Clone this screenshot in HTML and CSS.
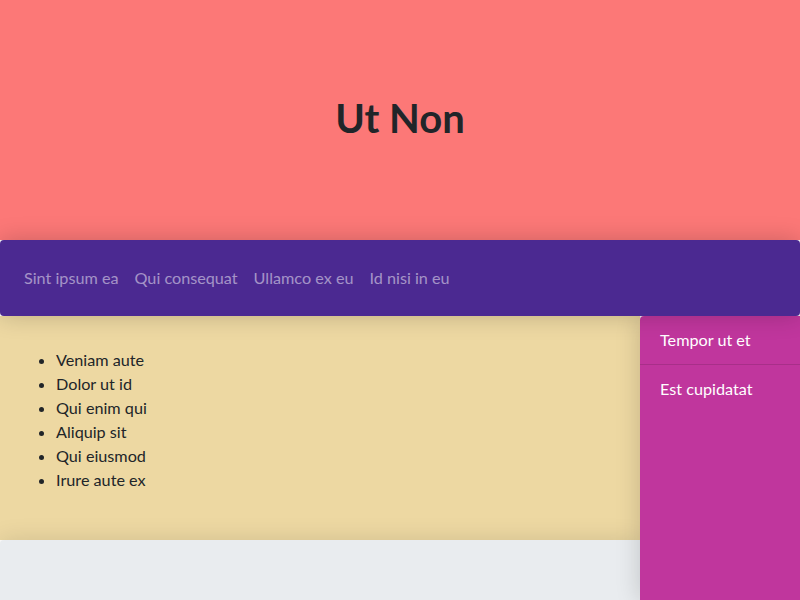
FILE: index.html
```html
<!DOCTYPE html>
<html>
<head>
<meta charset="utf-8">
<link rel="stylesheet" href="styles.css">
</head>
<body>
<div class="page">
  <header class="hero"><h1 class="title">Ut Non</h1></header>
  <nav class="navbar">
    <a class="nav-link">Sint ipsum ea</a>
    <a class="nav-link">Qui consequat</a>
    <a class="nav-link">Ullamco ex eu</a>
    <a class="nav-link">Id nisi in eu</a>
  </nav>
  <div class="body">
    <div class="main-col">
      <section class="content">
        <ul class="list">
          <li>Veniam aute</li>
          <li>Dolor ut id</li>
          <li>Qui enim qui</li>
          <li>Aliquip sit</li>
          <li>Qui eiusmod</li>
          <li>Irure aute ex</li>
        </ul>
      </section>
      <footer class="footer"></footer>
    </div>
    <aside class="sidebar">
      <div class="side-item">Tempor ut et</div>
      <div class="side-item">Est cupidatat</div>
    </aside>
  </div>
</div>
</body>
</html>
```

FILE: styles.css
```css
* { box-sizing: border-box; }
html, body { margin: 0; padding: 0; }
body {
  font-family: "Lato", "Noto Sans", sans-serif;
  font-size: 16.2px;
  line-height: 24px;
  color: #212529;
  width: 800px;
  height: 600px;
  overflow: hidden;
}
.page { display: flex; flex-direction: column; height: 600px; }
.hero {
  height: 240px;
  background: #fc7877;
  display: flex;
  align-items: center;
  justify-content: center;
  padding-bottom: 4px;
  position: relative;
  z-index: 0;
}
.title { margin: 0; font-size: 40px; font-weight: 700; line-height: 48px; color: #212529; }
.navbar {
  height: 76px;
  background: #4b2991;
  border-radius: 4px;
  display: flex;
  align-items: center;
  padding: 0 16px;
  box-shadow: 0 0 24px rgba(0,0,0,0.2);
  position: relative;
  z-index: 3;
}
.nav-link { color: rgba(255,255,255,0.5); padding: 0 8px; }
.body { display: flex; flex: 1; }
.main-col { width: 640px; display: flex; flex-direction: column; }
.content {
  height: 224px;
  background: #edd8a2;
  padding: 16px;
  position: relative;
  z-index: 0;
}
.list { margin: 16px 0 0; padding-left: 40px; }
.footer {
  flex: 1;
  background: #e9ecef;
  border-radius: 4px 0 0 0;
  box-shadow: 0 0 24px rgba(0,0,0,0.12);
  position: relative;
  z-index: 1;
}
.sidebar {
  width: 160px;
  background: #c0369d;
  border-radius: 4px 0 0 0;
  box-shadow: 0 0 24px rgba(0,0,0,0.18);
  position: relative;
  z-index: 2;
}
.side-item {
  color: #fff;
  padding: 12px 20px;
  border-bottom: 1px solid rgba(0,0,0,0.12);
}
.side-item:last-child { border-bottom: none; }
```
